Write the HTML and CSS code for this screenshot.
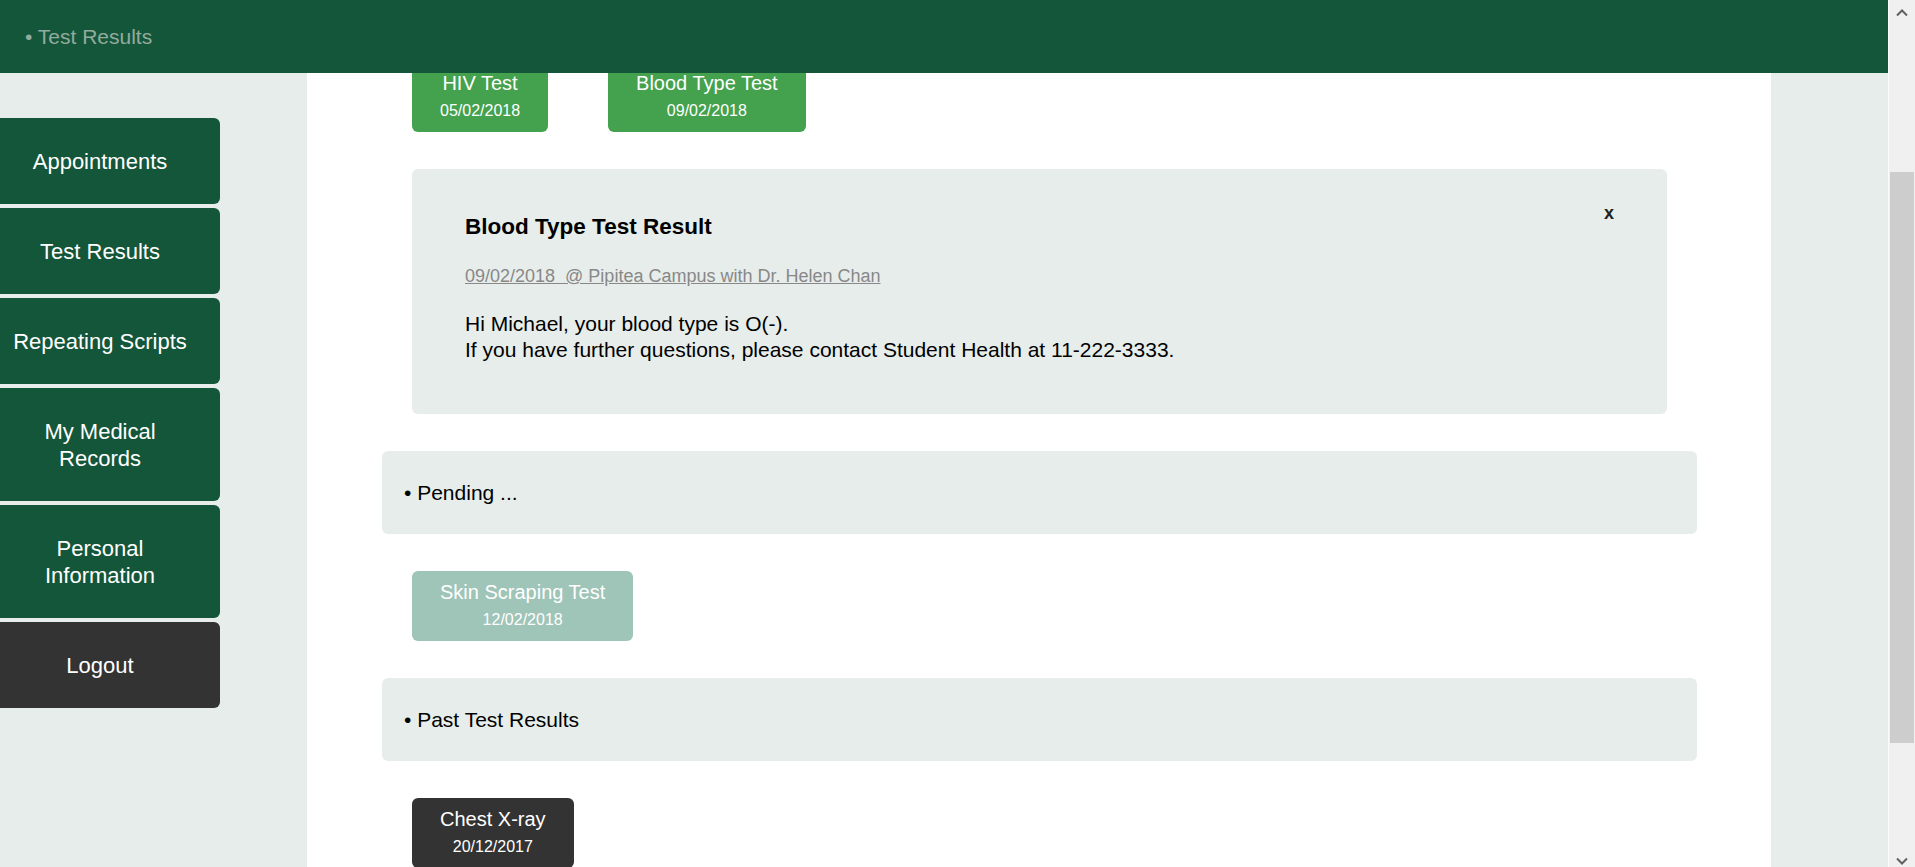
FILE: index.html
```html
<!DOCTYPE html>
<html lang="en">
<head>
<meta charset="utf-8">
<title>Test Results</title>
<link rel="stylesheet" href="styles.css">
</head>
<body>
<div class="app">
  <div class="page">
    <header class="topbar">• Test Results</header>
    <div class="columns">
      <nav class="sidebar">
        <a class="nav-btn">Appointments</a>
        <a class="nav-btn">Test Results</a>
        <a class="nav-btn">Repeating Scripts</a>
        <a class="nav-btn">My Medical Records</a>
        <a class="nav-btn">Personal Information</a>
        <a class="nav-btn nav-logout">Logout</a>
      </nav>
      <main class="content">
        <div class="test-row">
          <div class="test-btn test-done">
            <div class="test-name">HIV Test</div>
            <div class="test-date">05/02/2018</div>
          </div>
          <div class="test-btn test-done">
            <div class="test-name">Blood Type Test</div>
            <div class="test-date">09/02/2018</div>
          </div>
        </div>

        <section class="result-panel">
          <span class="close">x</span>
          <h3 class="result-title">Blood Type Test Result</h3>
          <div class="result-meta">09/02/2018&nbsp; @ Pipitea Campus with Dr. Helen Chan</div>
          <p class="result-body">Hi Michael, your blood type is O(-).<br>If you have further questions, please contact Student Health at 11-222-3333.</p>
        </section>

        <div class="section-bar">• Pending ...</div>

        <div class="test-row">
          <div class="test-btn test-pending">
            <div class="test-name">Skin Scraping Test</div>
            <div class="test-date">12/02/2018</div>
          </div>
        </div>

        <div class="section-bar">• Past Test Results</div>

        <div class="test-row">
          <div class="test-btn test-past">
            <div class="test-name">Chest X-ray</div>
            <div class="test-date">20/12/2017</div>
          </div>
        </div>
      </main>
      <aside class="gutter"></aside>
    </div>
  </div>
  <div class="scrollbar">
    <div class="sb-arrow">
      <svg width="12" height="8" viewBox="0 0 12 8"><path d="M1 6.5 L6 1.5 L11 6.5" fill="none" stroke="#606060" stroke-width="2"/></svg>
    </div>
    <div class="sb-track"><div class="sb-thumb"></div></div>
    <div class="sb-arrow sb-arrow-down">
      <svg width="12" height="8" viewBox="0 0 12 8"><path d="M1 1.5 L6 6.5 L11 1.5" fill="none" stroke="#606060" stroke-width="2"/></svg>
    </div>
  </div>
</div>
</body>
</html>
```
FILE: styles.css
```css
* { box-sizing: border-box; }
html, body {
  margin: 0;
  padding: 0;
  height: 867px;
  overflow: hidden;
  font-family: "Liberation Sans", Arial, sans-serif;
  color: #000;
  background: #fff;
}
.app {
  display: flex;
  width: 1915px;
  height: 867px;
}
.page {
  position: relative;
  width: 1888px;
  height: 867px;
  overflow: hidden;
}
.topbar {
  position: absolute;
  top: 0;
  left: 0;
  right: 0;
  z-index: 5;
  height: 73px;
  background: #14563a;
  color: #93ab9e;
  font-size: 21px;
  display: flex;
  align-items: center;
  padding-left: 25px;
}
.columns {
  display: flex;
  height: 867px;
}
.sidebar {
  width: 307px;
  flex: none;
  background: #e7edeb;
  padding-top: 118px;
  display: flex;
  flex-direction: column;
  align-items: flex-start;
}
.nav-btn {
  display: block;
  width: 240px;
  margin-left: -20px;
  margin-bottom: 4px;
  padding: 29.5px 30px;
  background: #14563a;
  color: #fff;
  border-radius: 6px;
  text-align: center;
  font-size: 22px;
  line-height: 27px;
}
.nav-logout { background: #333333; }
.content {
  width: 1464px;
  flex: none;
  background: #fff;
  padding: 62px 74px 0 75px;
}
.gutter {
  flex: 1;
  background: #e7edeb;
}
.test-row {
  display: flex;
  gap: 60px;
  padding-left: 30px;
  margin-bottom: 37px;
}
.test-btn {
  padding: 8px 28px;
  border-radius: 6px;
  color: #fff;
  text-align: center;
}
.test-name { font-size: 20px; line-height: 27px; }
.test-date { font-size: 16px; line-height: 27px; }
.test-done { background: #44a14e; }
.test-pending { background: #9fc4b8; }
.test-past { background: #333333; }
.result-panel {
  position: relative;
  margin: 0 30px 37px;
  background: #e7edea;
  border-radius: 6px;
  padding: 45px 53px 51px;
}
.close {
  position: absolute;
  top: 34px;
  right: 53px;
  font-size: 18px;
  line-height: 20px;
  font-weight: bold;
  color: #222;
}
.result-title {
  margin: 0;
  font-size: 22.5px;
  line-height: 26px;
  font-weight: bold;
}
.result-meta {
  margin-top: 25px;
  font-size: 18px;
  line-height: 22px;
  color: #888;
  text-decoration: underline;
}
.result-body {
  margin: 24px 0 0;
  font-size: 21px;
  line-height: 26px;
}
.section-bar {
  height: 83px;
  margin-bottom: 37px;
  background: #e7edea;
  border-radius: 6px;
  padding: 0 22px;
  display: flex;
  align-items: center;
  font-size: 21px;
}
.scrollbar {
  width: 27px;
  flex: none;
  height: 867px;
  background: #f0f0f0;
  border-left: 1px solid #fbfbfb;
  display: flex;
  flex-direction: column;
}
.sb-arrow {
  height: 26px;
  display: flex;
  align-items: center;
  justify-content: center;
}
.sb-arrow-down {
  align-items: flex-end;
  padding-bottom: 2px;
}
.sb-track {
  flex: 1;
}
.sb-thumb {
  margin: 146px 1px 0 1px;
  height: 571px;
  background: #cdcdcd;
}
```
